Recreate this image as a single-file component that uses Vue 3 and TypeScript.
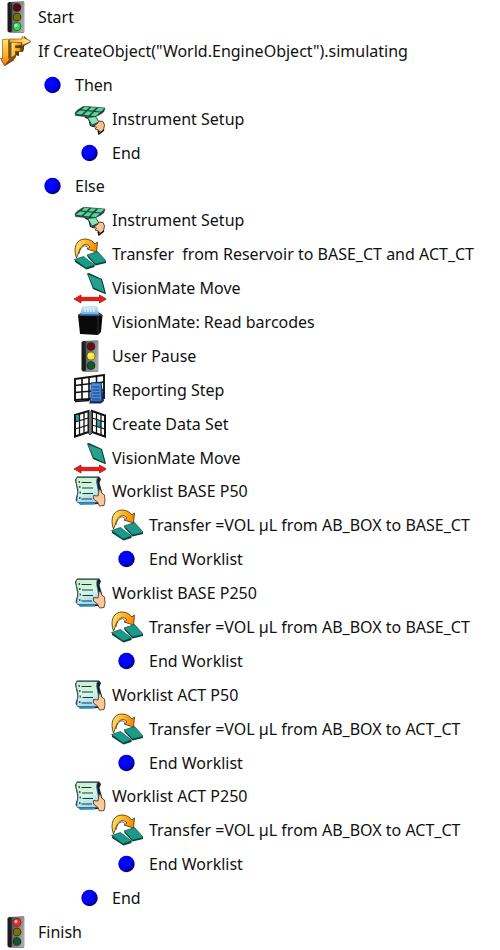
<script setup lang="ts">
type Icon =
  | 'light-green' | 'light-yellow' | 'light-red' | 'branch' | 'ball' | 'setup'
  | 'transfer' | 'move' | 'reader' | 'report' | 'dataset' | 'worklist'

interface Step {
  level: 1 | 2 | 3 | 4
  icon: Icon
  label: string
}

const worklist = (name: string, target: string): Step[] => [
  { level: 3, icon: 'worklist', label: `Worklist ${name}` },
  { level: 4, icon: 'transfer', label: `Transfer =VOL µL from AB_BOX to ${target}` },
  { level: 4, icon: 'ball', label: 'End Worklist' },
]

const steps: Step[] = [
  { level: 1, icon: 'light-green', label: 'Start' },
  { level: 1, icon: 'branch', label: 'If CreateObject("World.EngineObject").simulating' },
  { level: 2, icon: 'ball', label: 'Then' },
  { level: 3, icon: 'setup', label: 'Instrument Setup' },
  { level: 3, icon: 'ball', label: 'End' },
  { level: 2, icon: 'ball', label: 'Else' },
  { level: 3, icon: 'setup', label: 'Instrument Setup' },
  { level: 3, icon: 'transfer', label: 'Transfer  from Reservoir to BASE_CT and ACT_CT' },
  { level: 3, icon: 'move', label: 'VisionMate Move' },
  { level: 3, icon: 'reader', label: 'VisionMate: Read barcodes' },
  { level: 3, icon: 'light-yellow', label: 'User Pause' },
  { level: 3, icon: 'report', label: 'Reporting Step' },
  { level: 3, icon: 'dataset', label: 'Create Data Set' },
  { level: 3, icon: 'move', label: 'VisionMate Move' },
  ...worklist('BASE P50', 'BASE_CT'),
  ...worklist('BASE P250', 'BASE_CT'),
  ...worklist('ACT P50', 'ACT_CT'),
  ...worklist('ACT P250', 'ACT_CT'),
  { level: 3, icon: 'ball', label: 'End' },
  { level: 1, icon: 'light-red', label: 'Finish' },
]
</script>

<template>
  <svg class="sprite" aria-hidden="true">
    <defs>
      <linearGradient id="metal" x1="0" y1="0" x2="1" y2="0.4">
        <stop offset="0" stop-color="#4a4a4a" />
        <stop offset="0.5" stop-color="#777" />
        <stop offset="1" stop-color="#a8a8a8" />
      </linearGradient>
      <radialGradient id="blue" cx="0.42" cy="0.4" r="0.62">
        <stop offset="0" stop-color="#0808ff" />
        <stop offset="0.65" stop-color="#0000ee" />
        <stop offset="0.85" stop-color="#0000a0" />
        <stop offset="1" stop-color="#000040" />
      </radialGradient>
      <linearGradient id="gold" x1="0" y1="0" x2="1" y2="0.3">
        <stop offset="0" stop-color="#fff08a" />
        <stop offset="0.5" stop-color="#ffb52a" />
        <stop offset="1" stop-color="#f58a00" />
      </linearGradient>
      <linearGradient id="gold-down" x1="0" y1="0" x2="0" y2="1">
        <stop offset="0" stop-color="#ffe777" />
        <stop offset="0.6" stop-color="#ffae27" />
        <stop offset="1" stop-color="#ff6a10" />
      </linearGradient>
      <linearGradient id="gold-right" x1="0" y1="0" x2="1" y2="0">
        <stop offset="0" stop-color="#ffa51c" />
        <stop offset="1" stop-color="#fff3a0" />
      </linearGradient>
      <linearGradient id="paper" x1="0" y1="0" x2="0.3" y2="1">
        <stop offset="0" stop-color="#c8efc8" />
        <stop offset="0.6" stop-color="#d8f5e6" />
        <stop offset="1" stop-color="#a5d8f5" />
      </linearGradient>
      <linearGradient id="tray" x1="0" y1="0" x2="0" y2="1">
        <stop offset="0" stop-color="#e6f4ff" />
        <stop offset="1" stop-color="#62a8ea" />
      </linearGradient>
    </defs>

    <symbol id="light-body" viewBox="0 0 32 32">
      <path d="M9 1 24 0.500V31.500H9L7.500 30V2.500Z" fill="#1b1b1b" />
      <path d="M10.500 1H24.500V31H11.500Z" fill="url(#metal)" />
      <path d="M11.500 2V30" stroke="#2b2b2b" />
      <g fill="#262626">
        <circle cx="17" cy="6.500" r="4.300" />
        <circle cx="17" cy="16" r="4.300" />
        <circle cx="17" cy="25.500" r="4.300" />
      </g>
    </symbol>
    <symbol id="light-green" viewBox="0 0 32 32">
      <use href="#light-body" width="32" height="32" />
      <circle cx="17" cy="6.500" r="3.500" fill="#5a0808" />
      <circle cx="17" cy="16" r="3.500" fill="#7b7100" />
      <circle cx="17" cy="25.500" r="3.700" fill="#20e34a" />
      <circle cx="16" cy="24.500" r="1.600" fill="#c8ffd0" />
    </symbol>
    <symbol id="light-yellow" viewBox="0 0 32 32">
      <use href="#light-body" width="32" height="32" />
      <circle cx="17" cy="6.500" r="3.500" fill="#680c0c" />
      <circle cx="17" cy="16" r="3.800" fill="#ffe61c" />
      <circle cx="16" cy="15" r="1.600" fill="#fffbb8" />
      <circle cx="17" cy="25.500" r="3.500" fill="#0b5c2c" />
    </symbol>
    <symbol id="light-red" viewBox="0 0 32 32">
      <use href="#light-body" width="32" height="32" />
      <circle cx="17" cy="6.500" r="3.800" fill="#ff2020" />
      <circle cx="16" cy="5.500" r="1.600" fill="#ffc4c4" />
      <circle cx="17" cy="16" r="3.500" fill="#7b7100" />
      <circle cx="17" cy="25.500" r="3.500" fill="#0b5c2c" />
    </symbol>

    <symbol id="branch" viewBox="0 0 32 32">
      <path d="M3 6 10 5 24 4V1L31 7 24 11V14L23 17 19 16V21L14 20V25L11 27 5 31 1 25 3 22Z" fill="#5c4012" />
      <path d="M9 5H23V10H16V13H22V17H16V22L13 26 9 28Z" fill="#7d5216" />
      <path d="M11.500 7 21 6.500V10L15 10.500V13H20V16H15V20L11.500 22Z" fill="url(#gold)" />
      <path d="M2.500 4.500 8.500 4V23.500H10L4.500 31 0.500 23.500H2.500Z" fill="url(#gold-down)" stroke="#8c5715" stroke-width="0.700" />
      <path d="M9.500 4H22V1.500L31 6.500 22 10.500V7.500H9.500Z" fill="url(#gold-right)" stroke="#8c5715" stroke-width="0.700" />
    </symbol>

    <symbol id="ball" viewBox="0 0 32 32">
      <circle cx="15.500" cy="16" r="8.200" fill="url(#blue)" />
    </symbol>

    <symbol id="setup" viewBox="0 0 32 32">
      <path d="M1 10 3 7.500 9 3.500H13L31 5 30 8.500 27 11 20 14.500 1.500 12.500Z" fill="#174a36" stroke="#102a20" stroke-width="0.500" />
      <g fill="#60cfa0">
        <path d="M10.500 3.800 15.300 4.200 12.500 7 7.600 6.500Z" />
        <path d="M17.200 4.300 22.300 4.800 19 7.600 14.300 7.200Z" />
        <path d="M24.300 4.800 30.300 5.300 27.200 8.500 21.300 8Z" />
        <path d="M6 7.500 11.300 8 7.500 11.400 1.700 10.700Z" />
        <path d="M13.300 8.200 18.300 8.700 14.800 12.400 9.400 11.800Z" />
        <path d="M20.200 9 26 9.500 21.500 13.200 16.600 12.600Z" />
      </g>
      <path d="M11 14 15 16 16.500 22.500 21 24" fill="none" stroke="#111" stroke-width="1.300" />
      <path d="M13.500 14.500 21.500 13.500 25 19 18 22Z" fill="#86e2b9" stroke="#184636" stroke-width="0.900" />
      <path d="M17.500 22.500 25 19.500V21L19 24Z" fill="#174a38" />
      <path d="M20 22 23 21 25 18 29 18.500 30.500 22 29.500 27 26 29.500 24.500 27 21 26 22.500 24Z" fill="#f7c491" stroke="#49301e" stroke-width="0.900" />
      <path d="M24 27.500 25 31 30 27" fill="none" stroke="#111" stroke-width="1.400" />
    </symbol>

    <symbol id="transfer" viewBox="0 0 32 32">
      <path d="M1 22V24L12.500 31.500 20.500 29V27Z" fill="#063f3b" />
      <path d="M13.500 17V19L21.500 27.500 32 25V23Z" fill="#063f3b" />
      <path d="M0.500 21.500 9.500 18.500 20.500 27 12 30Z" fill="#1b9a8a" stroke="#0a5048" stroke-width="0.700" />
      <path d="M13 17 23.500 13.500 32.500 23.500 21.500 26Z" fill="#1b9a8a" stroke="#0a5048" stroke-width="0.700" />
      <path d="M2.500 20C-1.500 9 3 1 11 1 16 1 19 3.500 21 6L23.500 4 22.500 14 13 11 16 9C14 6.500 11.500 6 9 7.500 5 10 5 15 2.500 20Z" fill="url(#gold)" stroke="#603c0c" stroke-width="0.900" stroke-linejoin="round" />
      <path d="M5 16C6 10 9 7.500 12 8L14 9.500" fill="none" stroke="#3d3020" stroke-width="0.700" />
    </symbol>

    <symbol id="move" viewBox="0 0 32 32">
      <path d="M13 1.500 15 1 28 7 32 21.500 31 22 19 17Z" fill="#073f3b" />
      <path d="M14 2.500 27 7.500 30.500 20.500 19.500 15.500Z" fill="#279f8c" />
      <path d="M0 27 7 23V25.300H25.500V23L32.500 27 25.500 31V28.700H7V31Z" fill="#f71616" stroke="#7d1a12" stroke-width="0.700" />
    </symbol>

    <symbol id="reader" viewBox="0 0 32 32">
      <path d="M4 9 9 5H23L28.500 9 27 26 24 29 6 28Z" fill="#090909" />
      <path d="M4.500 9H24L28 9" stroke="#777" stroke-width="0.900" />
      <path d="M24 10V28" stroke="#333" />
      <path d="M8.500 1 22.500 0.500 25 8.500H6.500Z" fill="url(#tray)" stroke="#a0bdd6" stroke-width="0.600" />
      <path d="M6.500 8H25V9.500H6.500Z" fill="#2f76bd" />
      <path d="M11 2.500V6M14 2.500V6M17 2.500V6M20 2.500V6" stroke="#fff" />
    </symbol>

    <symbol id="report" viewBox="0 0 32 32">
      <path d="M1 5 30 1V24L1 26Z" fill="#fff" stroke="#111" stroke-width="1.900" />
      <path d="M8 4V26M15 3V26M22.500 2V24M1 11.500 30 8M1 18.500 30 16M1 27.500 15 26.500" fill="none" stroke="#111" stroke-width="1.600" />
      <path d="M17 8.500H27.500L30 27 27 29.500H15L16.500 26Z" fill="#16305c" />
      <path d="M17 9H27L27.500 27H15.500L17 24Z" fill="#4a8ddc" stroke="#173c76" stroke-width="0.700" />
      <path d="M18.500 13H25.500M18.500 16H25.500M18.500 19H25.500M18.500 22H26M18 25H26" stroke="#183c73" />
    </symbol>

    <symbol id="dataset" viewBox="0 0 32 32">
      <path d="M1 7 14.500 3V24L1 28.500Z" fill="#fff" stroke="#111" stroke-width="2" />
      <path d="M18 3 31 7.500V28.500L18 24Z" fill="#fff" stroke="#111" stroke-width="2" />
      <path d="M2 7.500 5 6.500V12.500L2 13.500Z" fill="#20a3b8" />
      <path d="M22.500 12 27 13.500V20L22.500 18.500Z" fill="#20a3b8" />
      <path d="M5.500 6V27M10 5V25M1 14 14.500 10M1 21 14.500 17M22.500 4.500V26M27 6V27M18 10 31 14M18 17 31 21" stroke="#111" stroke-width="1.300" />
      <path d="M14.500 3V25L16 27 18 25V3" fill="#777" stroke="#111" stroke-width="0.800" />
    </symbol>

    <symbol id="worklist" viewBox="0 0 32 32">
      <path d="M3 1.500H25L27 4 25.500 8 28 17 27 29 6 29.500 1.500 25 3.500 17 1 5Z" fill="#132238" />
      <path d="M3 2.500H23.500C21.500 7 24 12 24.500 17 25 22 24 25 23 27.500H3.500C1.500 25 4.500 20 4 15 3.500 10 0.500 6 3 2.500Z" fill="url(#paper)" stroke="#356052" stroke-width="0.800" />
      <path d="M7.500 7.500H17.500M8 13H19M8.500 18.500H19M7.500 24H18" stroke="#163e37" stroke-width="1.100" />
      <path d="M4.500 7H6M5 12H6.500M5.500 17.500H7M5 23H6.500" stroke="#2c6655" stroke-width="1.800" />
      <path d="M4 27.500H21V29.500H6Z" fill="#2b8fc0" />
      <path d="M19.500 20.500 24 21 25 14.500 27 15 27.500 18 30.500 20 31 26 30 30.500 25.500 31 23.500 27 19.500 24Z" fill="#f8c99a" stroke="#5b3b25" stroke-width="0.900" stroke-linejoin="round" />
    </symbol>
  </svg>

  <ul class="steps">
    <li v-for="(step, i) in steps" :key="i" class="step" :class="`level-${step.level}`">
      <svg class="icon" viewBox="0 0 32 32" aria-hidden="true"><use :href="`#${step.icon}`" /></svg>
      <span class="label">{{ step.label }}</span>
    </li>
  </ul>
</template>

<style>
body {
  margin: 0;
  background: #fff;
}
</style>

<style scoped>
.sprite {
  position: absolute;
  width: 0;
  height: 0;
}

.steps {
  display: grid;
  grid-auto-rows: 1fr;
  box-sizing: border-box;
  min-height: 100vh;
  margin: 0;
  padding: 0 0 1px;
  list-style: none;
  color: #111;
  font-family: "Noto Sans", "Open Sans", sans-serif;
  font-size: 16px;
  line-height: 24px;
}

.step {
  display: flex;
  align-items: center;
  gap: 6px;
}

.level-2 {
  padding-left: 37px;
}

.level-3 {
  padding-left: 74px;
}

.level-4 {
  padding-left: 111px;
}

.icon {
  flex: none;
  width: 32px;
  height: 32px;
  overflow: visible;
}

.label {
  white-space: pre;
}
</style>
